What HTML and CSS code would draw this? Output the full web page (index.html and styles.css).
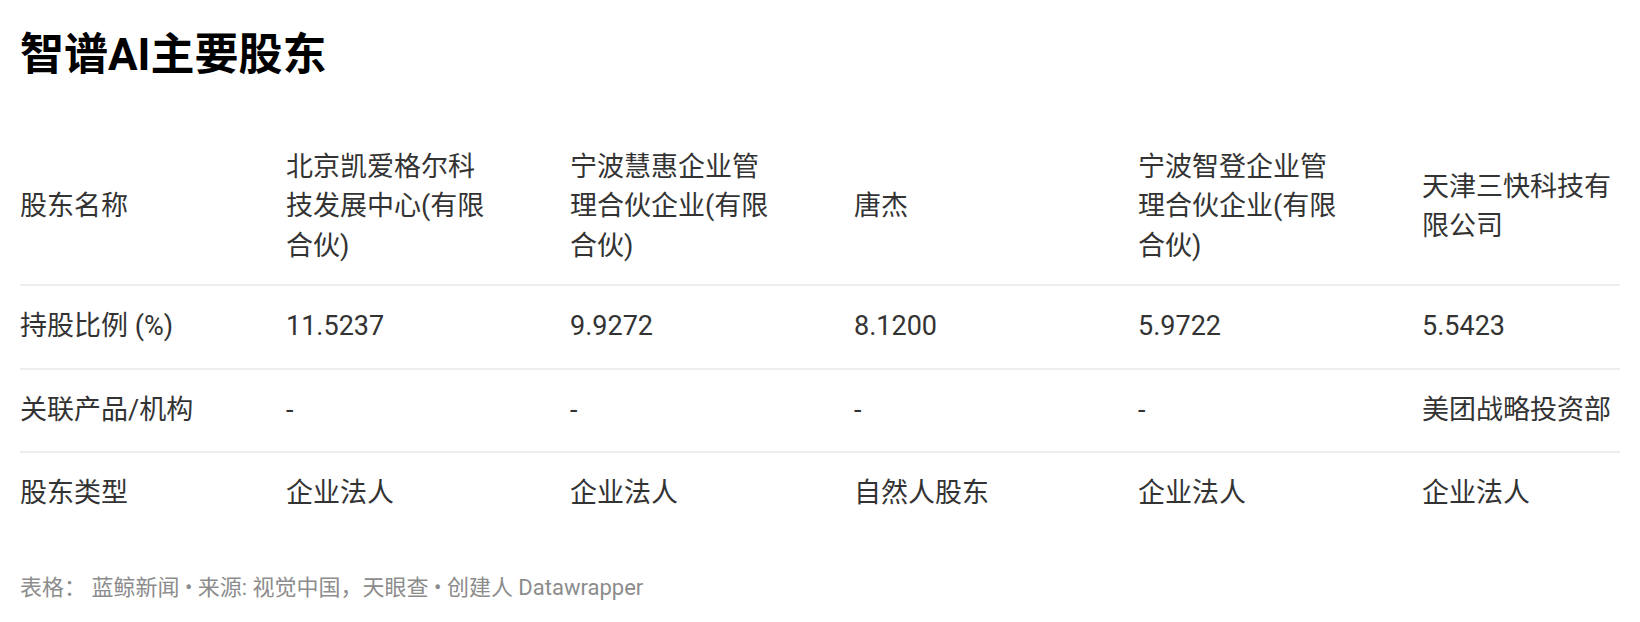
FILE: index.html
```html
<!DOCTYPE html>
<html lang="zh-CN">
<head>
<meta charset="utf-8">
<title>智谱AI主要股东</title>
<link rel="stylesheet" href="styles.css">
</head>
<body>
<div class="chart">
  <h1 class="title">智谱AI主要股东</h1>
  <table class="table">
    <colgroup>
      <col class="c-first">
      <col class="c-mid">
      <col class="c-mid">
      <col class="c-mid">
      <col class="c-mid">
      <col class="c-last">
    </colgroup>
    <thead>
      <tr>
        <th>股东名称</th>
        <th>北京凯爱格尔科技发展中心(有限合伙)</th>
        <th>宁波慧惠企业管理合伙企业(有限合伙)</th>
        <th>唐杰</th>
        <th>宁波智登企业管理合伙企业(有限合伙)</th>
        <th>天津三快科技有限公司</th>
      </tr>
    </thead>
    <tbody>
      <tr>
        <td>持股比例 (%)</td>
        <td>11.5237</td>
        <td>9.9272</td>
        <td>8.1200</td>
        <td>5.9722</td>
        <td>5.5423</td>
      </tr>
      <tr>
        <td>关联产品/机构</td>
        <td>-</td>
        <td>-</td>
        <td>-</td>
        <td>-</td>
        <td>美团战略投资部</td>
      </tr>
      <tr>
        <td>股东类型</td>
        <td>企业法人</td>
        <td>企业法人</td>
        <td>自然人股东</td>
        <td>企业法人</td>
        <td>企业法人</td>
      </tr>
    </tbody>
  </table>
  <p class="footer">表格： 蓝鲸新闻 • 来源: 视觉中国，天眼查 • 创建人 Datawrapper</p>
</div>
</body>
</html>
```

FILE: styles.css
```css
html, body {
  margin: 0;
  padding: 0;
  background: #ffffff;
}

.chart {
  padding: 0 20px;
  font-family: Roboto, "Noto Sans CJK SC", sans-serif;
  color: #333333;
}

.title {
  margin: 0;
  padding-top: 29px;
  font-size: 44px;
  line-height: 1.2;
  font-weight: 700;
  color: #000000;
}

.table {
  width: 1600px;
  margin-top: 50px;
  border-collapse: collapse;
  table-layout: fixed;
  font-size: 27px;
  line-height: 39.5px;
}

.c-first { width: 266px; }
.c-mid { width: 284px; }
.c-last { width: 198px; }

.table th,
.table td {
  text-align: left;
  font-weight: 400;
  vertical-align: middle;
  padding: 0 76px 0 0;
}

.table th:first-child,
.table td:first-child {
  padding-right: 0;
}

.table th:last-child,
.table td:last-child {
  padding-right: 0;
}

.table th {
  padding-top: 16px;
  padding-bottom: 18px;
}

.table td {
  padding-top: 21px;
  padding-bottom: 21px;
}

.table thead tr,
.table tbody tr:not(:last-child) {
  border-bottom: 2px solid #eeeeee;
}

.footer {
  margin: 38px 0 0;
  font-size: 22px;
  line-height: 30px;
  color: #8c8c8c;
}
```
